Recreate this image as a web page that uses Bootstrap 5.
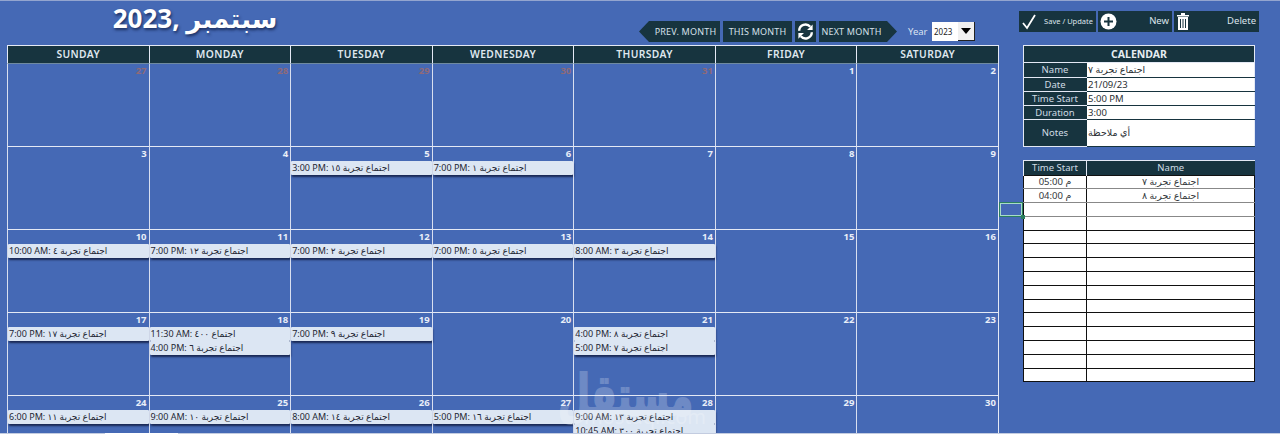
<!DOCTYPE html>
<html lang="en">
<head>
<meta charset="utf-8">
<title>Calendar</title>
<link href="https://cdn.jsdelivr.net/npm/bootstrap@5.3.0/dist/css/bootstrap.min.css" rel="stylesheet">
<style>
html,body{height:434px;overflow:hidden;}
body{background:#4569b5;color:#fff;font-family:"Noto Sans","DejaVu Sans",sans-serif;position:relative;border-top:1px solid #93a5cf;}
.sheet{height:432px;overflow:hidden;}
.left-pane{width:992px;margin-left:7px;flex:none;}
.top-band{height:44px;}
.month-title{width:376px;font:700 26px/34px "Noto Sans","DejaVu Sans",sans-serif;text-align:center;text-shadow:1px 2px 3px rgba(15,30,70,.75);}
.nav-zone{margin-left:256px;padding-top:20px;gap:3px;}
.nav-btn{height:21px;padding:0;border:0;border-radius:0;background:#17343f;color:#d6e0ea;font-size:9px;line-height:21px;letter-spacing:.2px;}
.nav-btn:hover{background:#17343f;color:#d6e0ea;}
.nav-prev{width:81px;padding-left:12px;clip-path:polygon(10px 0,100% 0,100% 100%,10px 100%,0 50%);}
.nav-this{width:69px;}
.nav-sync{width:21px;display:flex;align-items:center;justify-content:center;}
.nav-next{width:78px;padding-right:13px;clip-path:polygon(0 0,calc(100% - 10px) 0,100% 50%,calc(100% - 10px) 100%,0 100%);}
.year-label{font-size:9.5px;color:#dbe3f2;margin-left:8px;line-height:21px;width:21px;}
.year-box{width:43px;height:19px;background:#fff;color:#222;font-size:8px;line-height:19px;padding-left:2px;margin-top:1px;}
.year-drop{width:17px;height:19px;background:#f0f0f0;border-bottom:1px solid #222;border-right:1px solid #222;}
.year-drop::after{content:"";border-left:5px solid transparent;border-right:5px solid transparent;border-top:6px solid #000;}
.cal-grid{display:grid;grid-template-columns:repeat(7,1fr);grid-template-rows:18px repeat(5,83px);border-right:1px solid #e4e9f5;border-top:1px solid #e4e9f5;}
.day-head{background:#17343f;color:#dfe7ee;font-weight:600;font-size:10.3px;line-height:17px;text-align:center;letter-spacing:.4px;border-left:1px solid #e4e9f5;border-bottom:1px solid #6f8aa0;}
.day-cell{border-left:1px solid #d8dff0;border-bottom:1px solid #e4e9f5;min-width:0;}
.day-num{font-weight:700;font-size:9.5px;line-height:14px;text-align:right;padding-right:2px;color:#e9eef8;height:14px;}
.day-muted{color:#8f6a78;}
.cal-event{height:14px;background:#dce6f3;color:#1f2733;font-size:9px;line-height:13px;padding-left:1px;white-space:nowrap;overflow:hidden;border-radius:1px;box-shadow:1px 2px 2px rgba(15,25,60,.8);}
.side-pane{width:260px;margin-left:20px;flex:none;padding-top:10px;}
.act-row{gap:2px;height:22px;margin-bottom:12px;}
.act-btn{height:21px;padding:0 3px 0 2px;border:0;border-radius:0;background:#17343f;color:#dde5ec;font-size:9.5px;display:flex;align-items:center;justify-content:space-between;}
.act-btn:hover{background:#17343f;color:#dde5ec;}
.act-save{width:77px;font-size:7.5px;}
.act-new{width:74px;}
.act-del{width:85px;}
.panel-wrap{margin-left:4px;width:232px;}
.form-tbl{width:232px;border-collapse:collapse;table-layout:fixed;font-size:9.5px;margin-bottom:13px;}
.form-tbl caption{caption-side:top;padding:0;}
.panel-head{background:#17343f;color:#e6edf2;font-weight:700;font-size:10.5px;line-height:16px;height:18px;text-align:center;border:1px solid #e4e9f5;}
.form-tbl th{background:#17343f;color:#cfdbe4;font-weight:400;text-align:center;padding:0;height:14px;line-height:11px;border-bottom:1px solid #e4e9f5;border-left:1px solid #e4e9f5;}
.form-tbl td{background:#fff;color:#2b2f33;padding:0 0 0 1px;line-height:11px;height:14px;border-bottom:1px solid #17343f;border-left:1px dotted #17343f;border-right:1px solid #e4e9f5;white-space:nowrap;overflow:hidden;}
.form-tbl .tall-row th,.form-tbl .tall-row td{height:27px;}
.list-tbl{width:232px;border-collapse:collapse;table-layout:fixed;font-size:9.5px;}
.list-tbl th{background:#17343f;color:#cfdbe4;font-weight:400;text-align:center;height:15px;line-height:14px;padding:0;border-left:1px solid #e4e9f5;border-top:1px solid #e4e9f5;}
.list-tbl td{background:#fff;color:#33373b;text-align:center;height:13.8px;line-height:11px;padding:0;border:1px solid #111;}
.list-tbl tr.soft td{border-bottom-color:#888;}
.sel-cell{position:absolute;left:999px;top:201px;width:24px;height:15px;border:1px solid #2b7f5e;box-shadow:inset 0 0 0 1px #a8dcc8;}
.sel-cell::after{content:"";position:absolute;right:-3px;bottom:-3px;width:4px;height:4px;background:#2b7f5e;}
.col-mark{position:absolute;left:1000px;top:-1px;width:23px;height:1px;background:#2f7f63;}
.tab-strip{height:1px;background:#c3cce0;}
.tab-active{width:73px;height:1px;margin-left:105px;background:#fff;}
.stamp{position:absolute;left:524px;top:364px;width:200px;text-align:center;color:#fff;opacity:.22;pointer-events:none;white-space:nowrap;}
.stamp-ar{font:700 56px/62px "DejaVu Sans",sans-serif;transform:scaleX(.66);-webkit-text-stroke:2px #fff;}
.stamp-en{font:400 20px/20px "Noto Sans",sans-serif;margin-top:-20px;padding-left:42px;}
</style>
</head>
<body>
<div class="sheet d-flex">
  <div class="left-pane">
    <div class="top-band d-flex">
      <div class="month-title" dir="rtl">سبتمبر ,2023</div>
      <div class="nav-zone d-flex">
        <button class="btn nav-btn nav-prev">PREV. MONTH</button>
        <button class="btn nav-btn nav-this">THIS MONTH</button>
        <button class="btn nav-btn nav-sync" aria-label="Refresh">
          <svg width="19" height="19" viewBox="0 0 24 24" fill="none" stroke="#fff" stroke-width="3"><path d="M4 11a8 8 0 0 1 14-5"/><path d="M20 13a8 8 0 0 1-14 5"/><path d="M21 3v7h-7z" fill="#fff" stroke="none"/><path d="M3 21v-7h7z" fill="#fff" stroke="none"/></svg>
        </button>
        <button class="btn nav-btn nav-next">NEXT MONTH</button>
        <span class="year-label">Year</span>
        <div class="year-box d-flex justify-content-between">2023<span class="year-drop d-flex align-items-center justify-content-center"></span></div>
      </div>
    </div>
    <div class="cal-grid">
      <div class="day-head">SUNDAY</div><div class="day-head">MONDAY</div><div class="day-head">TUESDAY</div><div class="day-head">WEDNESDAY</div><div class="day-head">THURSDAY</div><div class="day-head">FRIDAY</div><div class="day-head">SATURDAY</div>

      <div class="day-cell"><div class="day-num day-muted">27</div></div>
      <div class="day-cell"><div class="day-num day-muted">28</div></div>
      <div class="day-cell"><div class="day-num day-muted">29</div></div>
      <div class="day-cell"><div class="day-num day-muted">30</div></div>
      <div class="day-cell"><div class="day-num day-muted">31</div></div>
      <div class="day-cell"><div class="day-num">1</div></div>
      <div class="day-cell"><div class="day-num">2</div></div>

      <div class="day-cell"><div class="day-num">3</div></div>
      <div class="day-cell"><div class="day-num">4</div></div>
      <div class="day-cell"><div class="day-num">5</div><div class="cal-event">3:00 PM: اجتماع تجربة ١٥</div></div>
      <div class="day-cell"><div class="day-num">6</div><div class="cal-event">7:00 PM: اجتماع تجربة ١</div></div>
      <div class="day-cell"><div class="day-num">7</div></div>
      <div class="day-cell"><div class="day-num">8</div></div>
      <div class="day-cell"><div class="day-num">9</div></div>

      <div class="day-cell"><div class="day-num">10</div><div class="cal-event">10:00 AM: اجتماع تجربة ٤</div></div>
      <div class="day-cell"><div class="day-num">11</div><div class="cal-event">7:00 PM: اجتماع تجربة ١٢</div></div>
      <div class="day-cell"><div class="day-num">12</div><div class="cal-event">7:00 PM: اجتماع تجربة ٢</div></div>
      <div class="day-cell"><div class="day-num">13</div><div class="cal-event">7:00 PM: اجتماع تجربة ٥</div></div>
      <div class="day-cell"><div class="day-num">14</div><div class="cal-event">8:00 AM: اجتماع تجربة ٣</div></div>
      <div class="day-cell"><div class="day-num">15</div></div>
      <div class="day-cell"><div class="day-num">16</div></div>

      <div class="day-cell"><div class="day-num">17</div><div class="cal-event">7:00 PM: اجتماع تجربة ١٧</div></div>
      <div class="day-cell"><div class="day-num">18</div><div class="cal-event">11:30 AM: اجتماع ٤٠٠</div><div class="cal-event">4:00 PM: اجتماع تجربة ٦</div></div>
      <div class="day-cell"><div class="day-num">19</div><div class="cal-event">7:00 PM: اجتماع تجربة ٩</div></div>
      <div class="day-cell"><div class="day-num">20</div></div>
      <div class="day-cell"><div class="day-num">21</div><div class="cal-event">4:00 PM: اجتماع تجربة ٨</div><div class="cal-event">5:00 PM: اجتماع تجربة ٧</div></div>
      <div class="day-cell"><div class="day-num">22</div></div>
      <div class="day-cell"><div class="day-num">23</div></div>

      <div class="day-cell"><div class="day-num">24</div><div class="cal-event">6:00 PM: اجتماع تجربة ١١</div></div>
      <div class="day-cell"><div class="day-num">25</div><div class="cal-event">9:00 AM: اجتماع تجربة ١٠</div></div>
      <div class="day-cell"><div class="day-num">26</div><div class="cal-event">8:00 AM: اجتماع تجربة ١٤</div></div>
      <div class="day-cell"><div class="day-num">27</div><div class="cal-event">5:00 PM: اجتماع تجربة ١٦</div></div>
      <div class="day-cell"><div class="day-num">28</div><div class="cal-event">9:00 AM: اجتماع تجربة ١٣</div><div class="cal-event">10:45 AM: اجتماع تجربة ٣٠٠</div></div>
      <div class="day-cell"><div class="day-num">29</div></div>
      <div class="day-cell"><div class="day-num">30</div></div>
    </div>
  </div>
  <div class="side-pane">
    <div class="act-row d-flex">
      <button class="btn act-btn act-save"><svg width="16" height="16" viewBox="0 0 16 16" fill="none" stroke="#fff" stroke-width="1.8"><path d="M2 9l4 5L14 1"/></svg><span>Save / Update</span></button>
      <button class="btn act-btn act-new"><svg width="17" height="17" viewBox="0 0 17 17"><circle cx="8.500" cy="8.500" r="8" fill="#fff"/><path d="M8.500 4v9M4 8.500h9" stroke="#17343f" stroke-width="2"/></svg><span>New</span></button>
      <button class="btn act-btn act-del"><svg width="14" height="17" viewBox="0 0 14 17" fill="#fff"><rect x="1" y="2" width="12" height="1.500"/><rect x="5" y="0" width="4" height="2"/><path d="M2 4h10v13H2zM4 6v9h1V6zm2.500 0v9h1V6zM9 6v9h1V6z" fill-rule="evenodd"/></svg><span>Delete</span></button>
    </div>
    <div class="panel-wrap">
      <table class="form-tbl">
        <caption class="panel-head">CALENDAR</caption>
        <colgroup><col style="width:63px"><col></colgroup>
        <tr><th>Name</th><td>اجتماع تجربة ٧</td></tr>
        <tr><th>Date</th><td>21/09/23</td></tr>
        <tr><th>Time Start</th><td>5:00 PM</td></tr>
        <tr><th>Duration</th><td>3:00</td></tr>
        <tr class="tall-row"><th>Notes</th><td>أي ملاحظة</td></tr>
      </table>
      <table class="list-tbl">
        <colgroup><col style="width:63px"><col></colgroup>
        <tr><th>Time Start</th><th>Name</th></tr>
        <tr class="soft"><td>م 05:00</td><td>اجتماع تجربة ٧</td></tr>
        <tr class="soft"><td>م 04:00</td><td>اجتماع تجربة ٨</td></tr>
        <tr class="soft"><td></td><td></td></tr>
        <tr><td></td><td></td></tr><tr><td></td><td></td></tr><tr><td></td><td></td></tr><tr><td></td><td></td></tr><tr><td></td><td></td></tr><tr><td></td><td></td></tr><tr><td></td><td></td></tr><tr><td></td><td></td></tr><tr><td></td><td></td></tr><tr><td></td><td></td></tr><tr><td></td><td></td></tr><tr><td></td><td></td></tr>
      </table>
    </div>
  </div>
</div>
<div class="tab-strip"><div class="tab-active"></div></div>
<div class="col-mark"></div>
<div class="sel-cell"></div>
<div class="stamp"><div class="stamp-ar">مستقل</div><div class="stamp-en">mostaql.com</div></div>
<script src="https://cdn.jsdelivr.net/npm/bootstrap@5.3.0/dist/js/bootstrap.bundle.min.js"></script>
</body>
</html>
